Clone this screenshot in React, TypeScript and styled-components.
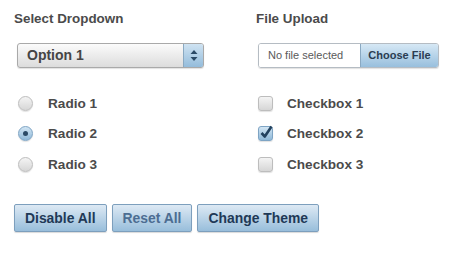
import React from 'react';
import styled, { createGlobalStyle } from 'styled-components';

const GlobalStyle = createGlobalStyle`
  body {
    margin: 0;
    background: #ffffff;
    font-family: "Liberation Sans", Arial, sans-serif;
  }
`;

const Page = styled.div`
  width: 461px;
  height: 268px;
  box-sizing: border-box;
  padding: 10px 14px 0 14px;
  display: flex;
  flex-direction: column;
`;

const Columns = styled.div`
  display: grid;
  grid-template-columns: 242px 1fr;
`;

const Column = styled.div`
  display: flex;
  flex-direction: column;
`;

const Heading = styled.div`
  font-size: 13.4px;
  font-weight: bold;
  color: #4b4b4b;
  line-height: 18px;
  height: 18px;
`;

const SelectBox = styled.div`
  margin: 15px 0 0 3px;
  width: 187px;
  height: 25px;
  box-sizing: border-box;
  display: flex;
  border: 1px solid #a9a9a9;
  border-radius: 3px;
  overflow: hidden;
  background: linear-gradient(#fbfbfb, #dcdcdc);
  box-shadow: 0 1px 1px rgba(0, 0, 0, 0.12);
`;

const SelectValue = styled.div`
  flex: 1;
  padding-left: 9px;
  font-size: 14px;
  font-weight: bold;
  color: #454545;
  line-height: 23px;
`;

const SelectArrow = styled.div`
  width: 19px;
  border-left: 1px solid #8aa9c2;
  background: linear-gradient(#cfe3f2, #94bcdb);
  display: flex;
  align-items: center;
  justify-content: center;
`;

const FileBox = styled.div`
  margin: 15px 0 0 2px;
  width: 181px;
  height: 25px;
  box-sizing: border-box;
  display: flex;
  border: 1px solid #b5bcc3;
  border-radius: 3px;
  overflow: hidden;
  box-shadow: 0 1px 1px rgba(0, 0, 0, 0.12);
`;

const FileName = styled.div`
  width: 92px;
  padding-left: 9px;
  font-size: 11px;
  color: #5a5a5a;
  line-height: 23px;
  background: #ffffff;
`;

const FileButton = styled.div`
  flex: 1;
  border-left: 1px solid #8aa9c2;
  background: linear-gradient(#d6e8f5, #98bfdd);
  font-size: 11px;
  font-weight: bold;
  color: #2a3d52;
  line-height: 23px;
  text-align: center;
`;

const OptionList = styled.div`
  margin-top: 27px;
  display: flex;
  flex-direction: column;
  gap: 14.5px;
`;

const OptionRow = styled.label`
  display: flex;
  align-items: center;
  height: 16px;
  font-size: 13.6px;
  font-weight: bold;
  color: #4b4b4b;
`;

const RadioMark = styled.span<{ $checked?: boolean }>`
  width: 15px;
  height: 15px;
  box-sizing: border-box;
  margin: 0 15px 0 4px;
  border-radius: 50%;
  border: 1px solid ${(p) => (p.$checked ? '#7ea4c4' : '#bdbdbd')};
  background: ${(p) =>
    p.$checked
      ? 'linear-gradient(#d2e6f4, #8fb8d8)'
      : 'linear-gradient(#f4f4f4, #d6d6d6)'};
  box-shadow: 0 1px 1px rgba(0, 0, 0, 0.12);
  display: flex;
  align-items: center;
  justify-content: center;

  &::after {
    content: '';
    display: ${(p) => (p.$checked ? 'block' : 'none')};
    width: 5px;
    height: 5px;
    border-radius: 50%;
    background: #2b4a66;
  }
`;

const CheckMark = styled.span<{ $checked?: boolean }>`
  position: relative;
  width: 15px;
  height: 15px;
  box-sizing: border-box;
  margin: 0 14px 0 2px;
  border-radius: 3px;
  border: 1px solid ${(p) => (p.$checked ? '#7ea4c4' : '#bdbdbd')};
  background: ${(p) =>
    p.$checked
      ? 'linear-gradient(#d2e6f4, #8fb8d8)'
      : 'linear-gradient(#f4f4f4, #d6d6d6)'};
  box-shadow: 0 1px 1px rgba(0, 0, 0, 0.12);

  svg {
    position: absolute;
    left: 0px;
    top: -3px;
  }
`;

const ButtonBar = styled.div`
  margin-top: 32px;
  display: flex;
  gap: 5px;
`;

const Button = styled.button<{ $muted?: boolean }>`
  height: 28px;
  padding: 0 10px;
  border: 1px solid #7d9fbd;
  border-radius: 2px;
  background: linear-gradient(#dde9f4, #98bedb);
  box-shadow: 0 1px 1px rgba(0, 0, 0, 0.15);
  font-family: inherit;
  font-size: 13.9px;
  font-weight: bold;
  color: ${(p) => (p.$muted ? '#4c6d92' : '#1f3957')};
  cursor: pointer;
`;

const radios = [
  { label: 'Radio 1', checked: false },
  { label: 'Radio 2', checked: true },
  { label: 'Radio 3', checked: false },
];

const checks = [
  { label: 'Checkbox 1', checked: false },
  { label: 'Checkbox 2', checked: true },
  { label: 'Checkbox 3', checked: false },
];

export default function App() {
  return (
    <>
      <GlobalStyle />
      <Page>
        <Columns>
          <Column>
            <Heading>Select Dropdown</Heading>
            <SelectBox>
              <SelectValue>Option 1</SelectValue>
              <SelectArrow>
                <svg width="8" height="13" viewBox="0 0 8 13">
                  <path d="M4 1 L7.5 5 L0.5 5 Z" fill="#2b4a66" />
                  <path d="M4 12 L7.5 8 L0.5 8 Z" fill="#2b4a66" />
                </svg>
              </SelectArrow>
            </SelectBox>
            <OptionList>
              {radios.map((r) => (
                <OptionRow key={r.label}>
                  <RadioMark $checked={r.checked} />
                  {r.label}
                </OptionRow>
              ))}
            </OptionList>
          </Column>
          <Column>
            <Heading>File Upload</Heading>
            <FileBox>
              <FileName>No file selected</FileName>
              <FileButton>Choose File</FileButton>
            </FileBox>
            <OptionList>
              {checks.map((c) => (
                <OptionRow key={c.label}>
                  <CheckMark $checked={c.checked}>
                    {c.checked && (
                      <svg width="15" height="16" viewBox="0 0 15 16">
                        <path
                          d="M2.5 9 L5.8 12.5 L12.5 2.5"
                          fill="none"
                          stroke="#23425f"
                          strokeWidth="2.6"
                          strokeLinejoin="round"
                        />
                      </svg>
                    )}
                  </CheckMark>
                  {c.label}
                </OptionRow>
              ))}
            </OptionList>
          </Column>
        </Columns>
        <ButtonBar>
          <Button>Disable All</Button>
          <Button $muted>Reset All</Button>
          <Button>Change Theme</Button>
        </ButtonBar>
      </Page>
    </>
  );
}
